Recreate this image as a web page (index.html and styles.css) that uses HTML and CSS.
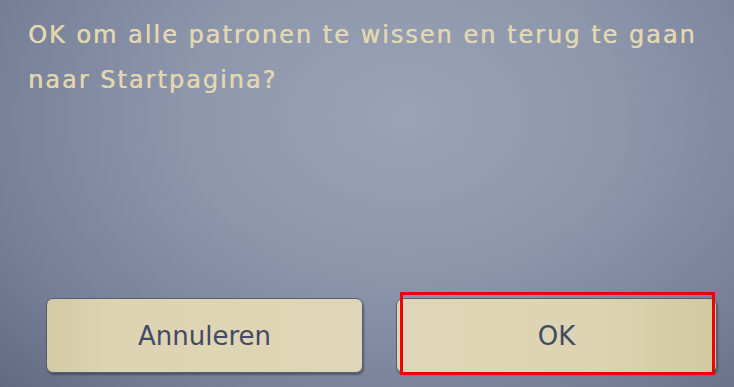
FILE: index.html
```html
<html>
    <head>
        <title>Patronen wissen</title>
        <link rel="stylesheet" href="styles.css">
    </head>
    <body>
        <div class="screen">
            <p class="message">OK om alle patronen te wissen en terug te gaan<br>naar Startpagina?</p>

            <div class="buttons">
                <button class="button cancel">Annuleren</button>
                <div class="ok-wrap">
                    <button class="button ok">OK</button>
                    <div class="focus"></div>
                </div>
            </div>
        </div>
    </body>
</html>
```

FILE: styles.css
```css
body {
    margin: 0;
    font-family: "DejaVu Sans", Verdana, sans-serif;
    background-color: #737c94;
}

.screen {
    width: 734px;
    height: 387px;
    display: flex;
    flex-direction: column;
    justify-content: space-between;
    background: radial-gradient(ellipse 85% 115% at 55% 30%, #9ba3b6 0%, #8d96ab 35%, #767f97 68%, #575f75 100%);
}

.message {
    margin: 0;
    padding: 13px 0 0 28px;
    font-size: 24px;
    line-height: 45px;
    letter-spacing: 2px;
    color: #e2d8b0;
    text-shadow: 0.4px 0 0 #e2d8b0;
}

.buttons {
    display: grid;
    grid-template-columns: 317px 321px;
    column-gap: 33px;
    padding: 0 0 14px 46px;
}

.button {
    height: 75px;
    border: 1px solid #575e72;
    border-radius: 7px;
    font-family: "DejaVu Sans", Verdana, sans-serif;
    font-size: 26px;
    color: #434a63;
    box-shadow: 1px 2px 2px rgba(40, 45, 60, 0.5);
}

.cancel {
    background: linear-gradient(90deg, #d3c9a4 0%, #ddd4b3 20%, #ded6b6 100%);
}

.ok-wrap {
    position: relative;
}

.ok {
    width: 100%;
    background: linear-gradient(90deg, #ded6b6 0%, #ddd4b3 60%, #d2c8a0 100%);
}

/* selection frame drawn over the OK button */
.focus {
    position: absolute;
    left: 4px;
    top: -6px;
    width: 309px;
    height: 77px;
    border: 3px solid #f00000;
}
```
